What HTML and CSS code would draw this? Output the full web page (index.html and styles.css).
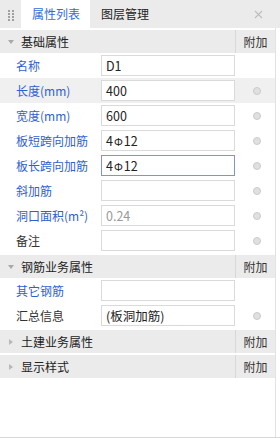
FILE: index.html
```html
<!DOCTYPE html>
<html lang="zh-CN">
	<head>
		<meta charset="UTF-8" />
		<meta name="viewport" content="width=device-width, initial-scale=1.0" />
		<title>属性列表</title>
		<link rel="stylesheet" href="styles.css">
	</head>
	<body>
		<div class="panel">
			<div class="tabs">
				<span class="grip">
					<svg width="8" height="12" viewBox="0 0 8 12">
						<rect x="1" y="1" width="2" height="2" fill="#a0a0a0"/>
						<rect x="5" y="1" width="2" height="2" fill="#a0a0a0"/>
						<rect x="1" y="4" width="2" height="2" fill="#a0a0a0"/>
						<rect x="5" y="4" width="2" height="2" fill="#a0a0a0"/>
						<rect x="1" y="7" width="2" height="2" fill="#a0a0a0"/>
						<rect x="5" y="7" width="2" height="2" fill="#a0a0a0"/>
						<rect x="1" y="10" width="2" height="2" fill="#a0a0a0"/>
						<rect x="5" y="10" width="2" height="2" fill="#a0a0a0"/>
					</svg>
				</span>
				<span class="tab active">属性列表</span>
				<span class="tab">图层管理</span>
				<span class="close">
					<svg width="9" height="9" viewBox="0 0 9 9">
						<path d="M1 1 L8 8 M8 1 L1 8" stroke="#bdbdbd" stroke-width="1.1"/>
					</svg>
				</span>
			</div>

			<div class="list">
				<div class="group">
					<span class="arrow down"></span>
					<span class="group-name">基础属性</span>
					<span class="extra">附加</span>
				</div>
				<div class="row">
					<span class="label blue">名称</span>
					<span class="field">D1</span>
					<span class="opt"></span>
				</div>
				<div class="row hover">
					<span class="label blue">长度(mm)</span>
					<span class="field">400</span>
					<span class="opt"><i class="dot"></i></span>
				</div>
				<div class="row">
					<span class="label blue">宽度(mm)</span>
					<span class="field">600</span>
					<span class="opt"><i class="dot"></i></span>
				</div>
				<div class="row">
					<span class="label blue">板短跨向加筋</span>
					<span class="field">4<span class="grade">Φ</span>12</span>
					<span class="opt"><i class="dot"></i></span>
				</div>
				<div class="row">
					<span class="label blue">板长跨向加筋</span>
					<span class="field focus">4<span class="grade">Φ</span>12</span>
					<span class="opt"><i class="dot"></i></span>
				</div>
				<div class="row">
					<span class="label blue">斜加筋</span>
					<span class="field"></span>
					<span class="opt"><i class="dot"></i></span>
				</div>
				<div class="row">
					<span class="label blue">洞口面积(m²)</span>
					<span class="field disabled">0.24</span>
					<span class="opt"><i class="dot"></i></span>
				</div>
				<div class="row">
					<span class="label">备注</span>
					<span class="field"></span>
					<span class="opt"><i class="dot"></i></span>
				</div>

				<div class="group">
					<span class="arrow down"></span>
					<span class="group-name">钢筋业务属性</span>
					<span class="extra">附加</span>
				</div>
				<div class="row">
					<span class="label blue">其它钢筋</span>
					<span class="field"></span>
					<span class="opt"></span>
				</div>
				<div class="row">
					<span class="label">汇总信息</span>
					<span class="field">(板洞加筋)</span>
					<span class="opt"><i class="dot"></i></span>
				</div>

				<div class="group">
					<span class="arrow right"></span>
					<span class="group-name">土建业务属性</span>
					<span class="extra">附加</span>
				</div>
				<div class="group">
					<span class="arrow right"></span>
					<span class="group-name">显示样式</span>
					<span class="extra">附加</span>
				</div>
			</div>
		</div>
	</body>
</html>
```

FILE: styles.css
```css
* {
	padding: 0;
	margin: 0;
	box-sizing: border-box;
}
body {
	width: 280px;
	height: 438px;
	background: #ffffff;
	font-family: "Noto Sans CJK SC", "Noto Sans", sans-serif;
	font-size: 12px;
	color: #333333;
}
.panel {
	width: 280px;
	height: 438px;
	border-bottom: 1px solid #d6d6d6;
	display: flex;
	flex-direction: column;
}

/* tab strip */
.tabs {
	height: 28px;
	background: #ebebeb;
	display: flex;
	align-items: stretch;
	flex-shrink: 0;
}
.grip {
	width: 21px;
	display: flex;
	align-items: center;
	justify-content: center;
	padding-top: 1px;
}
.tab {
	display: flex;
	align-items: center;
	padding: 0 10px 0 11px;
	line-height: 1;
	color: #222222;
}
.tab.active {
	background: #ffffff;
	color: #2f6de1;
	width: 69px;
}
.close {
	margin-left: auto;
	width: 34px;
	display: flex;
	align-items: center;
	justify-content: center;
	padding-right: 9px;
}

/* property list */
.list {
	flex: 1;
	width: 276px;
	border-right: 1px solid #e2e2e2;
}
.group {
	height: 23px;
	margin-top: 2px;
	background: #ebebeb;
	display: flex;
	align-items: center;
	color: #222222;
}
.arrow {
	width: 21px;
	display: flex;
	justify-content: center;
}
.arrow.down::before {
	content: "";
	border-left: 3px solid transparent;
	border-right: 3px solid transparent;
	border-top: 4px solid #a8a8a8;
}
.arrow.right::before {
	content: "";
	border-top: 3px solid transparent;
	border-bottom: 3px solid transparent;
	border-left: 4px solid #b8b8b8;
}
.group-name {
	flex: 1;
}
.extra {
	width: 40px;
	height: 100%;
	border-left: 1px solid #d8d8d8;
	display: flex;
	align-items: center;
	justify-content: center;
	color: #333333;
}
.row {
	height: 25px;
	display: grid;
	grid-template-columns: 101px 134px 1fr;
	align-items: center;
}
.row.hover {
	background: #f0f0f0;
}
.label {
	padding-left: 16px;
	color: #333333;
	white-space: nowrap;
}
.label.blue {
	color: #2f5fd0;
}
.field {
	height: 21px;
	background: #ffffff;
	border: 1px solid #dadada;
	display: flex;
	align-items: center;
	padding-left: 4px;
	font-size: 12.5px;
	color: #222222;
	white-space: nowrap;
	overflow: hidden;
}
.field.focus {
	border-color: #7f97c8;
}
.field.disabled {
	color: #9a9a9a;
}
.grade {
	font-size: 11px;
	margin: 0 1px;
}
.opt {
	display: flex;
	justify-content: center;
	padding-left: 3px;
}
.dot {
	width: 8px;
	height: 8px;
	border-radius: 50%;
	background: #e0e0e0;
	border: 1px solid #cbcbcb;
}
```
